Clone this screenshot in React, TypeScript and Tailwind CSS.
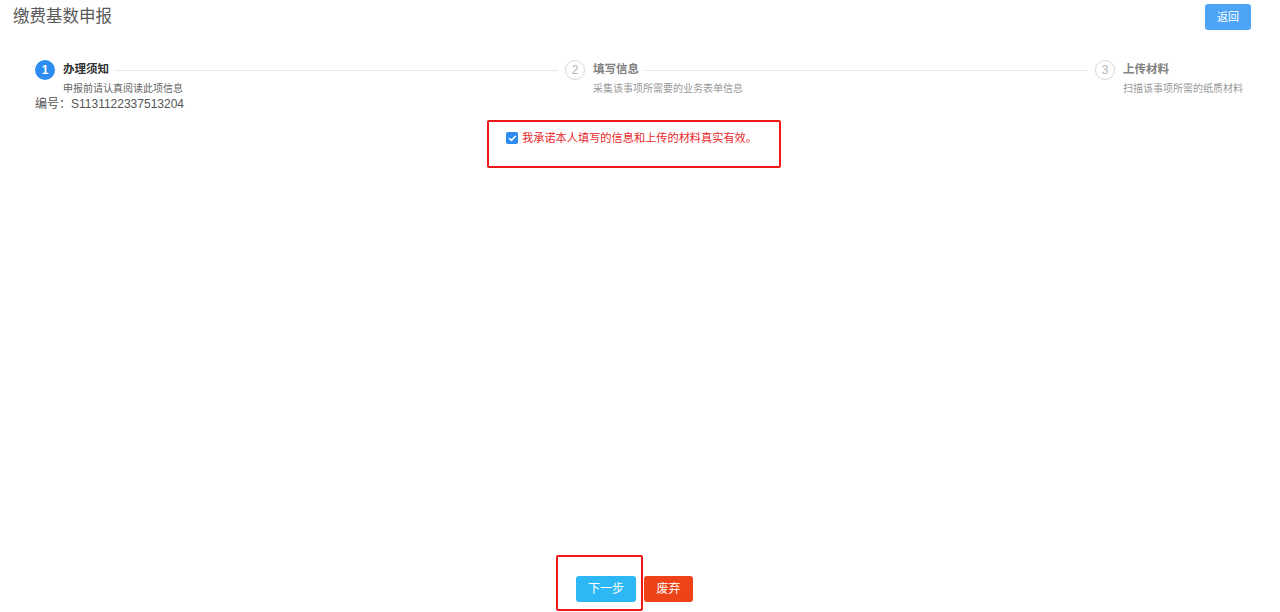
import { Check } from "lucide-react"

interface Step {
  no: number
  title: string
  desc: string
}

const steps: Step[] = [
  { no: 1, title: "办理须知", desc: "申报前请认真阅读此项信息" },
  { no: 2, title: "填写信息", desc: "采集该事项所需要的业务表单信息" },
  { no: 3, title: "上传材料", desc: "扫描该事项所需的纸质材料" },
]

const font = { fontFamily: '"Liberation Sans", "Noto Sans CJK SC", sans-serif' }

function StepItem({ step, active, last }: { step: Step; active: boolean; last: boolean }) {
  return (
    <div className={last ? "flex-1" : "w-[530px] shrink-0"}>
      <div className="flex items-center">
        <div
          className={
            active
              ? "w-5 h-5 rounded-full bg-[#2d8cf0] text-white text-[12px] font-bold flex items-center justify-center"
              : "w-5 h-5 rounded-full border border-[#d8d8d8] text-[#b5b5b5] text-[12px] flex items-center justify-center"
          }
        >
          {step.no}
        </div>
        <span
          className={
            active
              ? "ml-2 text-[11.5px] font-bold text-[#333] leading-5 whitespace-nowrap -translate-y-px"
              : "ml-2 text-[11.5px] font-bold text-[#808080] leading-5 whitespace-nowrap -translate-y-px"
          }
        >
          {step.title}
        </span>
        {!last && <div className="flex-1 h-px bg-[#e6e6e6] ml-[6px] mr-[7px]" />}
      </div>
      <p
        className={
          active
            ? "ml-7 mt-[2px] text-[10px] leading-[14px] text-[#666] whitespace-nowrap"
            : "ml-7 mt-[2px] text-[10px] leading-[14px] text-[#999] whitespace-nowrap"
        }
      >
        {step.desc}
      </p>
    </div>
  )
}

export default function App() {
  return (
    <div className="h-[612px] flex flex-col bg-white" style={font}>
      <div className="flex items-start justify-between pl-[13px] pr-[29px] pt-1">
        <h1 className="text-[16.5px] leading-6 text-[#595959]">缴费基数申报</h1>
        <button className="w-[46px] h-[26px] rounded-[3px] bg-[#4ea5f7] text-white text-[11px]">
          返回
        </button>
      </div>

      <div className="flex pl-[35px] mt-[30px]">
        {steps.map((s, i) => (
          <StepItem key={s.no} step={s} active={i === 0} last={i === steps.length - 1} />
        ))}
      </div>
      <div className="pl-[35px] text-[12px] leading-4 text-[#555]">编号：S1131122337513204</div>

      <div className="ml-[487px] mt-2 w-[294px] h-[48px] border-2 border-[#f01818] rounded-[2px] flex items-start pt-[8px] pl-[17px]">
        <div className="flex items-center">
          <span className="w-[12px] h-[12px] rounded-[2px] bg-[#2d8cf0] flex items-center justify-center">
            <Check className="w-[9px] h-[9px] text-white" strokeWidth={4} />
          </span>
          <span className="ml-[4px] text-[11.2px] leading-4 text-[#e8272b] whitespace-nowrap">
            我承诺本人填写的信息和上传的材料真实有效。
          </span>
        </div>
      </div>

      <div className="mt-auto flex items-start pl-[556px] pb-[1px]">
        <div className="w-[87px] h-[56px] border-2 border-[#f01818] rounded-[2px] pl-[18px] pt-[19px]">
          <button className="w-[60px] h-[26px] rounded-[3px] bg-[#2db7f5] text-white text-[12px]">
            下一步
          </button>
        </div>
        <button className="mt-[21px] ml-[1px] w-[49px] h-[26px] rounded-[3px] bg-[#ee4319] text-white text-[12px]">
          废弃
        </button>
      </div>
    </div>
  )
}
